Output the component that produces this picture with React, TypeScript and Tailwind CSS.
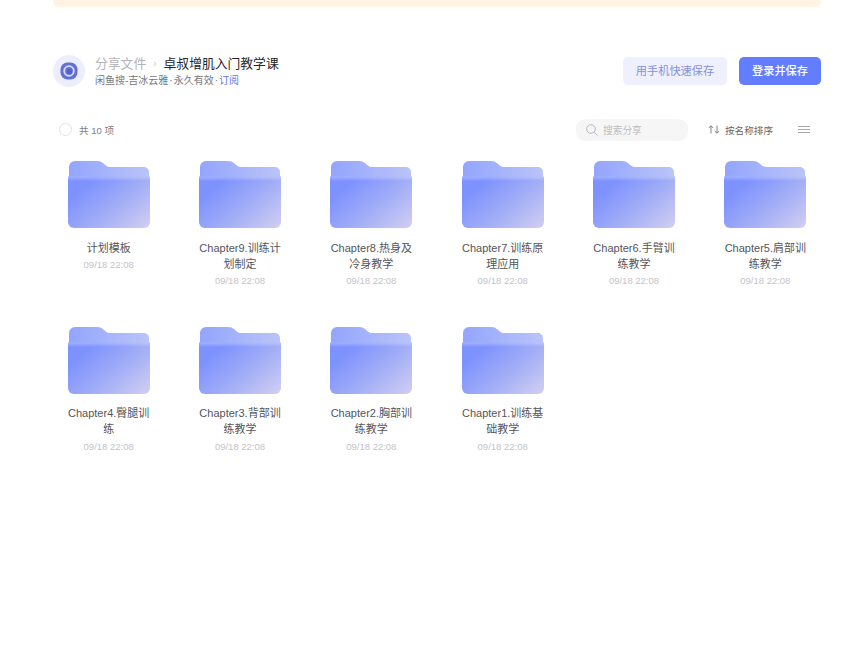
const folders = [
  "计划模板",
  "Chapter9.训练计划制定",
  "Chapter8.热身及冷身教学",
  "Chapter7.训练原理应用",
  "Chapter6.手臂训练教学",
  "Chapter5.肩部训练教学",
  "Chapter4.臀腿训练",
  "Chapter3.背部训练教学",
  "Chapter2.胸部训练教学",
  "Chapter1.训练基础教学",
];

const font = { fontFamily: '"Liberation Sans", "Noto Sans CJK SC", sans-serif' };

const FolderIcon = ({ id }: { id: number }) => (
  <svg width="82" height="67" viewBox="0 0 82 67" className="block">
    <defs>
      <linearGradient id={`front-${id}`} x1="0.12" y1="0.3" x2="1" y2="0.95">
        <stop offset="0" stopColor="#7e92fe" />
        <stop offset="0.5" stopColor="#a2aef6" />
        <stop offset="1" stopColor="#d0cdf2" />
      </linearGradient>
      <linearGradient id={`back-${id}`} x1="0" y1="0" x2="1" y2="0">
        <stop offset="0" stopColor="#93a5fd" />
        <stop offset="1" stopColor="#bac4f9" />
      </linearGradient>
      <linearGradient id={`edge-${id}`} x1="0" y1="0" x2="0" y2="1">
        <stop offset="0" stopColor="#ffffff" stopOpacity="0.3" />
        <stop offset="1" stopColor="#ffffff" stopOpacity="0" />
      </linearGradient>
    </defs>
    <path
      d="M1 6a6 6 0 0 1 6-6h22c3 0 4.500 .8 6.500 2.500l2 1.700c1.500 1.300 3 1.800 5 1.800h33.500a5 5 0 0 1 5 5v20H1z"
      fill={`url(#back-${id})`}
    />
    <path
      d="M0 15.500h82V61a6 6 0 0 1-6 6H6a6 6 0 0 1-6-6z"
      fill={`url(#front-${id})`}
    />
    <path d="M0 15.500h82V20H0z" fill={`url(#edge-${id})`} />
  </svg>
);

const ShareLogo = () => (
  <div className="flex h-8 w-8 items-center justify-center rounded-full bg-[#eceefe]">
    <svg width="18" height="18" viewBox="0 0 18 18">
      <rect x="0.500" y="0.500" width="17" height="17" rx="7" fill="#6371d6" />
      <circle cx="9" cy="9" r="4.800" fill="none" stroke="#d9ddfa" strokeWidth="1.800" />
      <circle cx="9.500" cy="9.500" r="2.400" fill="#5360c8" />
    </svg>
  </div>
);

export default function App() {
  return (
    <div className="h-[647px] w-full overflow-hidden bg-white pl-[53px] pr-[28px]" style={font}>
      <div className="h-[7px] rounded-b-[6px] bg-[#fff3e3]" />

      <header className="mt-[48px] flex h-8 items-center justify-between">
        <div className="flex items-center gap-[10px]">
          <ShareLogo />
          <div>
            <div className="flex h-[18px] items-center text-[12.800px] leading-[18px]">
              <span className="text-[#b4b4b8]">分享文件</span>
              <span className="mx-[7px] text-[10px] text-[#c8c8cc]">›</span>
              <span className="text-[#25262b]">卓叔增肌入门教学课</span>
            </div>
            <div className="mt-px text-[10px] leading-[14px] text-[#77777c]">
              闲鱼搜-吉冰云雅<span className="mx-[1px]">·</span>永久有效<span className="mx-[1px]">·</span>
              <span className="text-[#6478d8]">订阅</span>
            </div>
          </div>
        </div>
        <div className="flex items-center gap-3">
          <button className="h-7 w-[104px] rounded-[5px] bg-[#eef0fe] text-[11.200px] text-[#8490dc]">
            用手机快速保存
          </button>
          <button className="h-7 w-[82px] rounded-[5px] bg-[#637dff] text-[11.200px] font-medium text-white">
            登录并保存
          </button>
        </div>
      </header>

      <div className="mt-[32px] flex h-[22px] items-center justify-between pl-[6px] pr-[11px]">
        <div className="flex items-center gap-[7px]">
          <span className="h-[13px] w-[13px] rounded-full border border-[#e2e2e6]" />
          <span className="pt-[2px] text-[9.600px] text-[#808085]">共 10 项</span>
        </div>
        <div className="flex items-center">
          <div className="flex h-[22px] w-[112px] items-center gap-[5px] rounded-[9px] bg-[#f6f6f7] pl-[10px]">
            <svg width="12" height="12" viewBox="0 0 12 12" fill="none" stroke="#b2b2b7" strokeWidth="0.900">
              <circle cx="5" cy="5" r="4.300" />
              <path d="M8.200 8.200 11.500 11.500" />
            </svg>
            <span className="pt-[2px] text-[9.700px] text-[#bcbcc0]">搜索分享</span>
          </div>
          <div className="ml-[20px] flex items-center gap-[5px]">
            <svg width="12" height="9" viewBox="0 0 12 9" fill="none" stroke="#77777c" strokeWidth="0.900">
              <path d="M3 8.500V.8M.8 3 3 .8 5.200 3M9 .5V8.200M6.800 6 9 8.200 11.200 6" />
            </svg>
            <span className="pt-[2px] text-[9.600px] text-[#68686d]">按名称排序</span>
          </div>
          <svg width="12" height="8" viewBox="0 0 12 8" fill="none" stroke="#a9a9ae" strokeWidth="1" className="ml-[25px]">
            <path d="M0 .5h12M0 3.500h12M0 6.500h12" />
          </svg>
        </div>
      </div>

      <div className="mx-[-10px] mt-[20px] grid grid-cols-6">
        {folders.map((name, i) => (
          <div key={name} className="flex h-[166px] flex-col items-center">
            <FolderIcon id={i} />
            <p className={`${i < 6 ? "mt-[12px]" : "mt-[11px]"} w-[84px] text-center text-[11px] leading-4 break-all text-[#55555a]`}>
              {name}
            </p>
            <p className={`${i < 6 ? "mt-px" : "mt-[2px]"} text-[9.500px] leading-[15px] text-[#c4c4c8]`}>09/18 22:08</p>
          </div>
        ))}
      </div>
    </div>
  );
}
